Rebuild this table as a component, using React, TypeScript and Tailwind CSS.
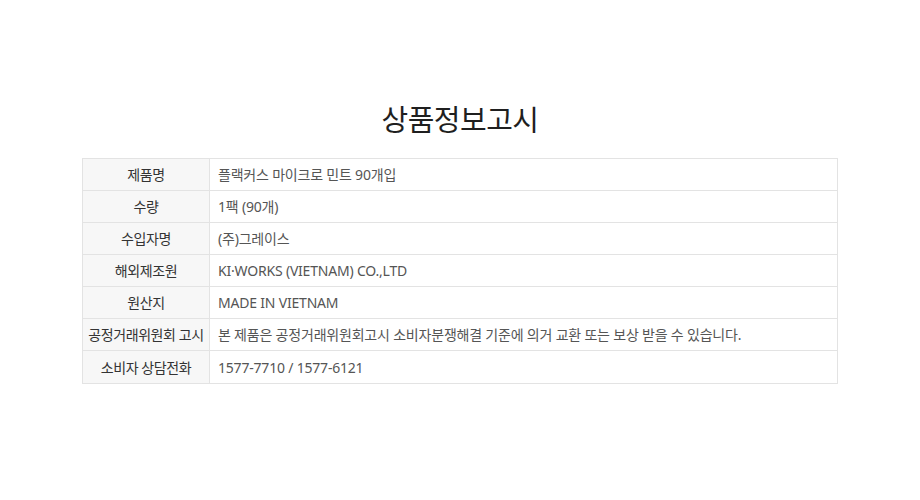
import React from 'react';

const rows: [string, string][] = [
  ['제품명', '플랙커스 마이크로 민트 90개입'],
  ['수량', '1팩 (90개)'],
  ['수입자명', '(주)그레이스'],
  ['해외제조원', 'KI·WORKS (VIETNAM) CO.,LTD'],
  ['원산지', 'MADE IN VIETNAM'],
  ['공정거래위원회 고시', '본 제품은 공정거래위원회고시 소비자분쟁해결 기준에 의거 교환 또는 보상 받을 수 있습니다.'],
  ['소비자 상담전화', '1577-7710 / 1577-6121'],
];

const App: React.FC = () => {
  return (
    <div
      className="w-[920px] h-[500px] bg-white pt-[100px]"
      style={{ fontFamily: '"Noto Sans", "Noto Sans CJK KR", sans-serif' }}
    >
      <h1 className="text-center text-[29px] leading-[40px] font-normal text-[#1f1f1f] tracking-[-0.5px]">
        상품정보고시
      </h1>

      {/* 정보 테이블 */}
      <div className="mx-[82px] mt-[18px] border border-[#e3e3e3]">
        {rows.map(([label, value], i) => (
          <div
            key={label}
            className={`flex h-[32px] ${i < rows.length - 1 ? 'border-b border-[#e3e3e3]' : ''}`}
          >
            <div className="w-[127px] shrink-0 flex items-center justify-center bg-[#f7f7f7] border-r border-[#e3e3e3] text-[14px] text-[#333] tracking-[-0.4px]">
              {label}
            </div>
            <div className="flex items-center pl-[8px] text-[14px] text-[#555] tracking-[-0.2px]">
              {value}
            </div>
          </div>
        ))}
      </div>
    </div>
  );
};

export default App;
